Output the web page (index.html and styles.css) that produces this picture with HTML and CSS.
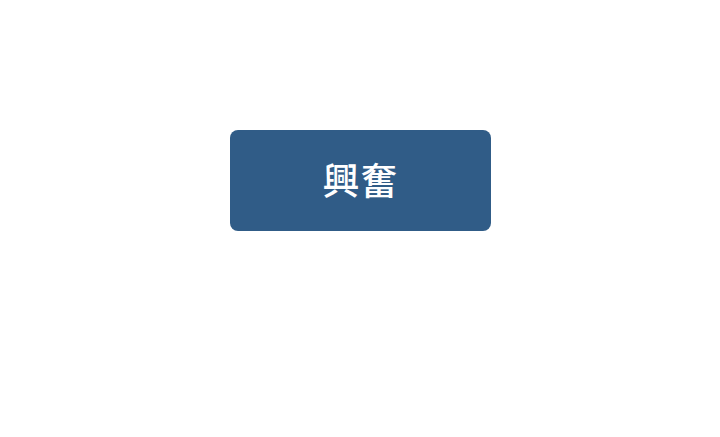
FILE: index.html
```html
<!DOCTYPE html>
<html lang="zh-Hant">
<head>
<meta charset="utf-8">
<link rel="stylesheet" href="styles.css">
</head>
<body>
<main class="stage">
  <div class="button">興奮</div>
</main>
</body>
</html>
```
FILE: styles.css
```css
html, body {
  margin: 0;
  padding: 0;
  background: #ffffff;
}
.stage {
  width: 720px;
  height: 437px;
  padding-top: 130px;
  box-sizing: border-box;
  display: flex;
  justify-content: flex-start;
  padding-left: 230px;
}
.button {
  width: 261px;
  height: 101px;
  border-radius: 8px;
  background: #305c87;
  color: #ffffff;
  display: flex;
  align-items: center;
  justify-content: center;
  padding-bottom: 3px;
  box-sizing: border-box;
  font-family: "Noto Sans CJK TC", "Noto Sans CJK SC", sans-serif;
  font-size: 37px;
  font-weight: 500;
  letter-spacing: 1px;
}
```
